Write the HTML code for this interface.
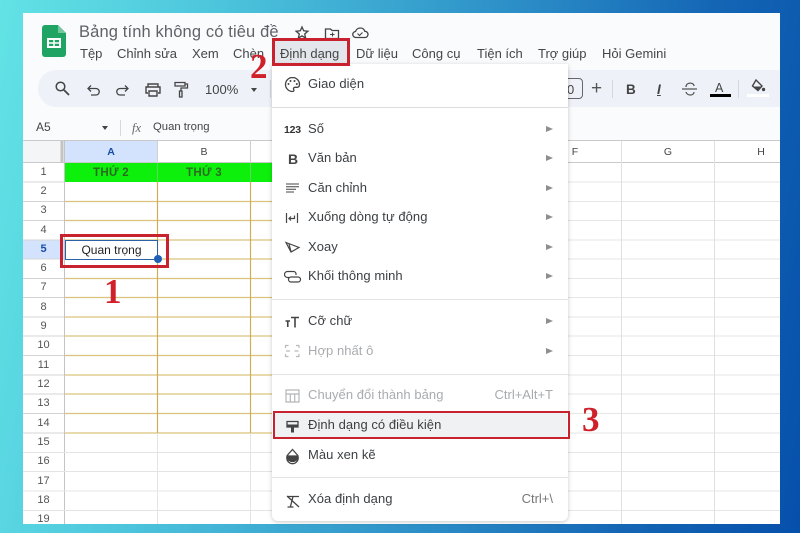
<!DOCTYPE html>
<html><head><meta charset="utf-8"><style>
html,body{margin:0;padding:0}
body{width:800px;height:533px;overflow:hidden;position:relative;background:linear-gradient(100deg,#62e3e5 0%,#4cc4dc 25%,#2f93c9 55%,#1466b5 80%,#0650ab 100%);font-family:"Liberation Sans","Noto Sans CJK SC",sans-serif;color:#3c4043}
div,span,svg{position:absolute}
.t{white-space:nowrap;line-height:16px}
.menu{font-size:13px;top:46px;color:#444746}
.m{font-size:13px;left:36px;color:#3c4043;letter-spacing:.05px}
.d{color:#a9abae}
.a{left:274px;width:0;height:0;border-left:7px solid #8e8e8e;border-top:3.5px solid transparent;border-bottom:3.5px solid transparent}
.r{left:23px;width:41px;text-align:center;font-size:11px;color:#555;line-height:14px}
.c{font-size:10.5px;text-align:center;color:#444;line-height:14px;top:145px}
.red{border:3px solid #c7222e;box-sizing:border-box}
.n{font-family:"Liberation Serif",serif;font-weight:bold;color:#d0202a;font-size:35px;line-height:37px}
</style></head><body>
<div id="w" style="left:23px;top:13px;width:757px;height:511px;background:#f9fbfd;overflow:hidden"></div>

<!-- header -->
<svg style="left:42px;top:25px" width="25" height="32" viewBox="0 0 25 32"><path d="M3 0H16L24 8V29a3 3 0 0 1-3 3H3a3 3 0 0 1-3-3V3a3 3 0 0 1 3-3z" fill="#1fa463"/><path d="M16 0L24 8H16z" fill="#74c69d"/><path d="M6 14h12v8H6z" fill="none" stroke="#fff" stroke-width="2"/><path d="M6 18h12M12 14v8" stroke="#fff" stroke-width="1.500"/></svg>
<div class="t" style="left:79px;top:22px;font-size:16.5px;line-height:20px;color:#5f6368;letter-spacing:.13px">Bảng tính không có tiêu đề</div>
<svg style="left:294px;top:24px" width="80" height="17" viewBox="0 0 80 17" fill="none" stroke="#444" stroke-width="1.300"><path d="M8 3l1.700 3.800 4.200.4-3.200 2.800 1 4.100L8 11.900 4.300 14.100l1-4.100L2.100 7.200l4.200-.4z"/><path d="M31.500 5h5l1.500 1.500h6.500v8h-13z"/><path d="M36 10.500h4.500M38.500 8.500v4" stroke-width="1.100"/><path d="M66.500 4a4.500 4.500 0 0 1 4.300 3.300A3 3 0 0 1 71 13.500H62a3 3 0 0 1-.5-6A5 5 0 0 1 66.500 4z"/><path d="M63.500 9.500l2 2 3-3" stroke-width="1.100"/></svg>
<div class="t menu" style="left:80px">Tệp</div>
<div class="t menu" style="left:117px">Chỉnh sửa</div>
<div class="t menu" style="left:192px">Xem</div>
<div class="t menu" style="left:233px">Chèn</div>
<div style="left:275px;top:41px;width:72px;height:22px;background:#e3e6ea"></div>
<div class="t menu" style="left:280px">Định dạng</div>
<div class="t menu" style="left:356px">Dữ liệu</div>
<div class="t menu" style="left:412px">Công cụ</div>
<div class="t menu" style="left:477px">Tiện ích</div>
<div class="t menu" style="left:538px">Trợ giúp</div>
<div class="t menu" style="left:602px">Hỏi Gemini</div>

<!-- toolbar -->
<div style="left:38px;top:70px;width:742px;height:37px;background:#eef2f8;border-radius:18px 0 0 18px"></div>
<svg style="left:54px;top:80px" width="120" height="18" viewBox="0 0 120 18" fill="none" stroke="#444" stroke-width="1.500"><circle cx="6.500" cy="6.500" r="4.300"/><path d="M10 10l5 5" stroke-width="1.800"/><path d="M35 8.500h7a3.200 3.200 0 0 1 0 6.500h-5M37 5.500l-3 3 3 3" stroke-width="1.300"/><path d="M73 8.500h-7a3.200 3.200 0 0 0 0 6.500h5M71 5.500l3 3-3 3" stroke-width="1.300"/><path d="M94 6.500V4h10v2.500M94 13h-2V7h14v6h-2M95 11h8v5h-8z" stroke-width="1.400"/></svg>
<svg style="left:174px;top:81px" width="18" height="17" viewBox="0 0 18 17" fill="none" stroke="#444" stroke-width="1.300"><path d="M1 1.500h10v3.500H1zM11 3h2.500v4H7v3M5.500 10h2.500v6H5.500z"/></svg>
<div class="t" style="left:205px;top:82px;font-size:13px;color:#444">100%</div>
<div style="left:251px;top:88px;border-top:4px solid #444;border-left:3.500px solid transparent;border-right:3.500px solid transparent"></div>
<div style="left:270px;top:80px;width:1px;height:18px;background:#d5d8dc"></div>
<div style="left:540px;top:78px;width:43px;height:21px;border:1px solid #666;border-radius:4px;box-sizing:border-box"></div>
<div class="t" style="left:567px;top:82px;font-size:13px;color:#444">0</div>
<div class="t" style="left:591px;top:80px;font-size:19px;line-height:18px;color:#555">+</div>
<div style="left:612px;top:80px;width:1px;height:18px;background:#d5d8dc"></div>
<div class="t" style="left:626px;top:82px;font-size:13.500px;font-weight:bold;color:#444">B</div>
<div class="t" style="left:657px;top:82px;font-size:13.500px;font-weight:bold;font-style:italic;color:#444;text-decoration:underline">I</div>
<svg style="left:681px;top:81px" width="18" height="16" viewBox="0 0 18 16" fill="none" stroke="#555" stroke-width="1.300"><path d="M1 8h15M5 6c0-5 8-5 8-1M5 11c1 4 8 4 8 0"/></svg>
<div class="t" style="left:715px;top:80px;font-size:12.500px;color:#444">A</div>
<div style="left:710px;top:94px;width:21px;height:3px;background:#000"></div>
<div style="left:738px;top:80px;width:1px;height:18px;background:#d5d8dc"></div>
<svg style="left:750px;top:79px" width="16" height="14" viewBox="0 0 16 14"><path d="M6 1l6 6-4 4.500L2.500 7z" fill="none" stroke="#444" stroke-width="1.400"/><path d="M3 7.500h8.500L8 11.500z" fill="#444"/><circle cx="13.500" cy="10.500" r="1.700" fill="#444"/></svg>
<div style="left:747px;top:94px;width:22px;height:3px;background:#fff"></div>

<!-- formula bar -->
<div class="t" style="left:36px;top:119px;font-size:12px;color:#444">A5</div>
<div style="left:102px;top:126px;border-top:4px solid #444;border-left:3.500px solid transparent;border-right:3.500px solid transparent"></div>
<div style="left:120px;top:120px;width:1px;height:16px;background:#d5d8dc"></div>
<div class="t" style="left:132px;top:120px;font-size:12.500px;font-style:italic;font-family:'Liberation Serif',serif;color:#666">fx</div>
<div class="t" style="left:153px;top:119px;font-size:11.300px;color:#444">Quan trọng</div>

<!-- grid -->
<div style="left:23px;top:140px;width:757px;height:384px;background:#fff"></div>
<div style="left:23px;top:140px;width:41px;height:23px;background:#f4f5f6"></div>
<div style="left:65px;top:141px;width:92px;height:22px;background:#d3e3fd"></div>
<div style="left:23px;top:240px;width:41px;height:19px;background:#d3e3fd"></div>
<svg style="left:0;top:0" width="800" height="533" fill="none">
<path d="M23 140.500H780" stroke="#c9c9c9"/>
<path d="M23 162.500H780" stroke="#c9c9c9"/>
<path d="M62 141v22" stroke="#c4c4c4" stroke-width="3"/>
<path d="M157.500 141v22M250.500 141v22" stroke="#d0d0d0"/>
<path d="M64.500 140V524" stroke="#c4c4c4"/>
<path d="M23 182H64M23 201.500H64M23 220.500H64M23 240H64M23 259H64M23 278.500H64M23 297.500H64M23 317H64M23 336H64M23 355.500H64M23 375H64M23 394H64M23 413.500H64M23 433H64" stroke="#d4d4d4"/>
<path d="M65 201.500H272M65 220.500H272M65 240H272M65 259H272M65 278.500H272M65 297.500H272M65 317H272M65 336H272M65 355.500H272M65 375H272M65 394H272M65 413.500H272M65 433H272" stroke="#dcc37c" stroke-width="1.200"/>
<path d="M157.500 182V433M250.500 182V433" stroke="#cfae55" stroke-width="1.200"/>
<path d="M23 452.500H272M23 471.500H272M23 491H272M23 510.500H272M157.500 433V524M250.500 433V524" stroke="#e4e4e4"/>
<path d="M568 182H780M568 201.500H780M568 220.500H780M568 240H780M568 259H780M568 278.500H780M568 297.500H780M568 317H780M568 336H780M568 355.500H780M568 375H780M568 394H780M568 413.500H780M568 433H780M568 452.500H780M568 471.500H780M568 491H780M568 510.500H780" stroke="#e6e6e6"/>
<path d="M621.500 141V524M714.500 141V524" stroke="#e0e0e0"/>
</svg>
<div style="left:65px;top:163px;width:207px;height:19px;background:#0cf00c"></div>
<div style="left:157px;top:163px;width:1px;height:19px;background:#5fd65f"></div>
<div style="left:250px;top:163px;width:1px;height:19px;background:#5fd65f"></div>
<div class="t" style="left:65px;top:165px;width:92px;text-align:center;font-size:11.500px;font-weight:bold;color:#2c6b1f;letter-spacing:.3px">THỨ 2</div>
<div class="t" style="left:158px;top:165px;width:92px;text-align:center;font-size:11.500px;font-weight:bold;color:#2c6b1f;letter-spacing:.3px">THỨ 3</div>
<div class="c" style="left:65px;width:92px;font-weight:bold;color:#174ea6">A</div>
<div class="c" style="left:158px;width:92px">B</div>
<div class="c" style="left:545px;width:60px">F</div>
<div class="c" style="left:638px;width:60px">G</div>
<div class="c" style="left:731px;width:60px">H</div>
<div class="r" style="top:165px">1</div>
<div class="r" style="top:184px">2</div>
<div class="r" style="top:203px">3</div>
<div class="r" style="top:223px">4</div>
<div class="r" style="top:242px;font-weight:bold;color:#174ea6">5</div>
<div class="r" style="top:261px">6</div>
<div class="r" style="top:280px">7</div>
<div class="r" style="top:300px">8</div>
<div class="r" style="top:319px">9</div>
<div class="r" style="top:338px">10</div>
<div class="r" style="top:358px">11</div>
<div class="r" style="top:377px">12</div>
<div class="r" style="top:396px">13</div>
<div class="r" style="top:416px">14</div>
<div class="r" style="top:435px">15</div>
<div class="r" style="top:454px">16</div>
<div class="r" style="top:474px">17</div>
<div class="r" style="top:493px">18</div>
<div class="r" style="top:512px;height:12px;overflow:hidden">19</div>

<div style="left:65px;top:240px;width:93px;height:20px;border:1px solid #2a62a8;box-sizing:border-box;background:#fff"></div>
<div class="t" style="left:65px;top:242px;width:93px;text-align:center;font-size:12px;color:#222">Quan trọng</div>
<div style="left:154px;top:255px;width:8px;height:8px;border-radius:50%;background:#1f5fb5"></div>

<!-- menu panel -->
<div style="left:272px;top:64px;width:296px;height:457px;background:#fff;border-radius:0 0 6px 6px;box-shadow:0 1px 4px rgba(0,0,0,.22)"></div>
<div style="left:272px;top:107px;width:296px;height:1px;background:#dadce0"></div>
<div style="left:272px;top:299px;width:296px;height:1px;background:#e3e4e6"></div>
<div style="left:272px;top:374px;width:296px;height:1px;background:#e3e4e6"></div>
<div style="left:272px;top:477px;width:296px;height:1px;background:#e3e4e6"></div>
<div style="left:275px;top:413px;width:292px;height:24px;background:#f0f1f3"></div>

<div style="left:272px;top:64px;width:296px;height:457px">
<div class="t m" style="top:12px">Giao diện</div>
<div class="t" style="left:12px;top:58px;font-size:10.500px;font-weight:bold;color:#333;letter-spacing:-.2px">123</div>
<div class="t m" style="top:57px">Số</div><div class="a" style="top:62px"></div>
<div class="t" style="left:16px;top:87px;font-size:14px;font-weight:bold;color:#444">B</div>
<div class="t m" style="top:86px">Văn bản</div><div class="a" style="top:91px"></div>
<div class="t m" style="top:116px">Căn chỉnh</div><div class="a" style="top:121px"></div>
<div class="t m" style="top:145px">Xuống dòng tự động</div><div class="a" style="top:150px"></div>
<div class="t m" style="top:175px">Xoay</div><div class="a" style="top:180px"></div>
<div class="t m" style="top:204px">Khối thông minh</div><div class="a" style="top:209px"></div>
<div class="t m" style="top:249px">Cỡ chữ</div><div class="a" style="top:254px"></div>
<div class="t m d" style="top:279px">Hợp nhất ô</div><div class="a" style="top:284px"></div>
<div class="t m d" style="top:323px">Chuyển đổi thành bảng</div>
<div class="t d" style="right:15px;top:323px;font-size:13px">Ctrl+Alt+T</div>
<div class="t m" style="top:353px">Định dạng có điều kiện</div>
<div class="t m" style="top:383px">Màu xen kẽ</div>
<div class="t m" style="top:427px">Xóa định dạng</div>
<div class="t" style="right:15px;top:427px;font-size:13px;color:#777">Ctrl+\</div>
</div>

<!-- menu icons -->
<svg style="left:284px;top:76px" width="18" height="445" viewBox="0 0 18 445" fill="none" stroke="#444" stroke-width="1.300">
<path d="M8.500 1.500a7 7 0 1 0 0 14c1.500 0 1.700-1.200 1.200-2-.6-1 0-2.200 1.300-2.200h2c1.600 0 2.500-1 2.500-2.800 0-4-3.200-7-7-7z"/>
<g fill="#444" stroke="none"><circle cx="4.500" cy="8" r="1"/><circle cx="6.500" cy="5" r="1"/><circle cx="10.500" cy="5" r="1"/><circle cx="12.800" cy="8" r="1"/></g>
<path d="M2 108h13M2 110.700h13M2 113.300h10M2 116h8" stroke-width="1"/>
<path d="M2.500 137v10M13.500 137v10M5 142.500h5.500v-3M7 140.500l-2 2 2 2" stroke-width="1.200"/>
<path d="M2 166.500l13 5-8 4.500zM5 168l2 7.500" stroke-width="1.200"/>
<path d="M12 199v-1a2.500 2.500 0 0 0-2.500-2.500h-6a2.500 2.500 0 0 0 0 6H5M7 201h7a2.500 2.500 0 0 1 0 5H7a2.500 2.500 0 0 1 0-5z" stroke-width="1.200"/>
<path d="M7 241.500h8M11 241.500v10M1.500 245h4.500M3.750 245v6" stroke-width="1.600"/>
<g stroke="#b8babc" stroke-width="1.200"><path d="M1.500 272v-2.500h3M1.500 278v2.500h3M15 272v-2.500h-3M15 278v2.500h-3M2 275h4M14.500 275h-4"/></g>
<g stroke="#b4b6b8" stroke-width="1.200"><path d="M2 314h13v12H2zM2 318h13M6.300 318v8M10.700 318v8"/></g>
<path d="M3 345.500h11v5.500H3z" stroke-width="1.300"/><path d="M3 348.500h11v3H3z" fill="#444" stroke="none"/><path d="M7 351h3v5.500H7z" fill="#444" stroke="none"/>
<path d="M8.500 373.500l4.500 5a5.700 5.700 0 1 1-9 0z"/><path d="M3 380h11a5.500 5.500 0 0 1-11 0z" fill="#444"/>
<path d="M3 420.500h12M9 420.500l-2.500 10M3 420l12 11M3.500 431h6" stroke-width="1.300"/>
</svg>

<!-- annotations -->
<div class="red" style="left:272px;top:38px;width:78px;height:28px"></div>
<div class="red" style="left:60px;top:234px;width:109px;height:34px"></div>
<div class="red" style="left:273px;top:411px;width:297px;height:28px;border-width:2.500px"></div>
<div class="n" style="left:104px;top:273px">1</div>
<div class="n" style="left:250px;top:48px">2</div>
<div class="n" style="left:582px;top:401px">3</div>
</body></html>
